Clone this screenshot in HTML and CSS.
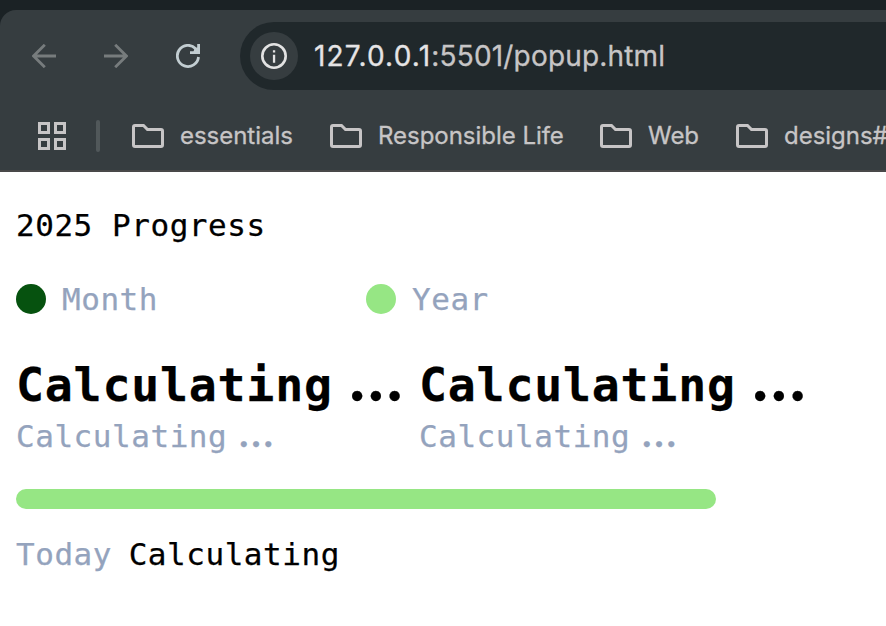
FILE: index.html
```
<!DOCTYPE html>
<html lang="en">
<head>
<meta charset="utf-8">
<title>2025 Progress</title>
<link rel="stylesheet" href="styles.css">
</head>
<body>
<svg class="defs" aria-hidden="true">
  <symbol id="folder" viewBox="0 0 32 24"><path d="M3 1.5H11.5L15.5 5.5H29Q30.5 5.5 30.5 7V21Q30.5 22.5 29 22.5H3Q1.5 22.5 1.5 21V3Q1.5 1.5 3 1.5Z" fill="none" stroke="currentColor" stroke-width="3"/></symbol>
</svg>
<header class="browser">
  <div class="toolbar">
    <svg class="nav dim" viewBox="0 0 24 24"><path d="M24 12H2M12.8 .8L1.6 12L12.8 23.2"/></svg>
    <svg class="nav dim" viewBox="0 0 24 24"><path d="M0 12H22M11.2 .8L22.4 12L11.2 23.2"/></svg>
    <svg class="nav" viewBox="0 0 24 24"><path d="M22.5 13A10.6 10.6 0 1 1 19.7 4.7L22 8M22.6 0V8.6H14"/><path d="M18.5 4.5L23 3V9H17Z" fill="currentColor" stroke="none"/></svg>
    <div class="address">
      <span class="info"><svg viewBox="0 0 26 26"><circle cx="13" cy="13" r="11.7" fill="none" stroke="currentColor" stroke-width="2.6"/><path d="M11.9 7.2h2.3v2.3h-2.3zM11.9 11.7h2.3v8h-2.3z" fill="currentColor"/></svg></span>
      <span class="url"><span class="host">127.0.0.1</span>:5501/popup.html</span>
    </div>
  </div>
  <nav class="bookmarks">
    <svg class="apps" viewBox="0 0 28 28"><path d="M1.5 1.5h9v9h-9zM17.5 1.5h9v9h-9zM1.5 17.5h9v9h-9zM17.5 17.5h9v9h-9z" fill="none" stroke="currentColor" stroke-width="3"/></svg>
    <span class="divider"></span>
    <div class="folders">
      <div class="folder"><svg><use href="#folder"/></svg><span>essentials</span></div>
      <div class="folder"><svg><use href="#folder"/></svg><span>Responsible Life</span></div>
      <div class="folder"><svg><use href="#folder"/></svg><span>Web</span></div>
      <div class="folder"><svg><use href="#folder"/></svg><span>designs#</span></div>
    </div>
  </nav>
</header>
<main class="popup">
  <div class="title">2025 Progress</div>
  <div class="legend">
    <div class="key"><span class="dot month"></span>Month</div>
    <div class="key"><span class="dot year"></span>Year</div>
  </div>
  <div class="stats">
    <div><div class="value">Calculating<span class="dots">...</span></div><div class="note">Calculating<span class="dots">...</span></div></div>
    <div><div class="value">Calculating<span class="dots">...</span></div><div class="note">Calculating<span class="dots">...</span></div></div>
  </div>
  <div class="bar"></div>
  <div class="today"><span class="muted">Today</span> Calculating</div>
</main>
</body>
</html>
```
FILE: styles.css
```
* { box-sizing: border-box; }
body { margin: 0; width: 886px; height: 626px; overflow: hidden; background: #fff; }
svg { display: block; flex: none; }
.defs { position: absolute; width: 0; height: 0; }

.browser { height: 172px; padding-top: 10px; background: #1b2225; font-family: Inter, sans-serif; color: #c7c5c6; }
.toolbar { display: flex; align-items: center; height: 92px; padding: 0 0 0 32px; background: #363d40; border-top-left-radius: 16px; }
.nav { width: 24px; height: 24px; margin-right: 48px; color: #c2cdd1; fill: none; stroke: currentColor; stroke-width: 2.8; overflow: hidden; }
.nav.dim { color: #777c7d; stroke-width: 2.8; }
.nav:nth-child(3) { margin-right: 40px; }
.address { display: flex; align-items: center; flex: 1; height: 68px; padding-left: 10px; background: #20282b; border-radius: 34px 0 0 34px; }
.info { display: grid; place-items: center; width: 48px; height: 48px; border-radius: 50%; background: #363d40; color: #e3e3e3; }
.info svg { width: 26px; height: 26px; }
.url { margin-left: 16px; font-size: 28px; line-height: 36px; letter-spacing: 0.18px; white-space: nowrap; -webkit-text-stroke: 0.3px; }
.host { color: #e5e4e5; letter-spacing: 1.2px; }

.bookmarks { display: flex; align-items: center; height: 70px; padding: 0 0 0 38px; background: #363d40; border-bottom: 2px solid #494849; }
.apps { width: 28px; height: 28px; }
.divider { width: 4px; height: 32px; margin: 0 32px 0 30px; border-radius: 2px; background: #51585a; flex: none; }
.folders { display: grid; grid-template-columns: 198px 270px 136px 150px; }
.folder { display: flex; align-items: center; gap: 16px; font-size: 24px; line-height: 32px; letter-spacing: -0.03px; white-space: nowrap; -webkit-text-stroke: 0.3px; }
.folder svg { width: 32px; height: 24px; }

.popup { padding: 32px 16px 0; font: 31px/42px "DejaVu Sans Mono", monospace; letter-spacing: 0.54px; color: #000; -webkit-text-stroke: 0.25px; }
.legend { display: grid; grid-template-columns: 350px 350px; margin-top: 32px; color: #94a3bd; }
.key { display: flex; align-items: center; gap: 16px; }
.dot { width: 30px; height: 30px; border-radius: 50%; }
.month { background: #06520f; }
.year { background: #96e684; }
.stats { display: grid; grid-template-columns: 403px 403px; margin-top: 29px; }
.value { height: 66px; font-size: 46.5px; font-weight: 700; line-height: 56px; letter-spacing: 0.8px; white-space: nowrap; }
.note { height: 42px; line-height: 34px; color: #94a3bd; }
.dots { display: inline-block; width: 57.6px; text-align: center; font-family: Lato, sans-serif; font-weight: 900; font-size: 36px; line-height: 1; letter-spacing: 3.6px; text-indent: 3.6px; }
.value .dots { width: 86.4px; font-size: 62px; line-height: 56px; letter-spacing: 4px; text-indent: 4px; }
.bar { width: 700px; height: 20px; margin-top: 32px; border-radius: 10px; background: #96e684; }
.today { margin-top: 24px; word-spacing: -2.6px; }
.muted { color: #94a3bd; }
```
